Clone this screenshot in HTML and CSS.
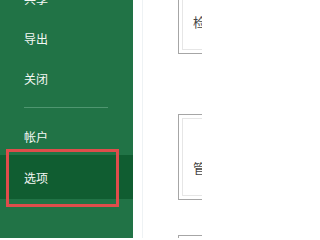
FILE: index.html
```html
<!DOCTYPE html>
<html>
<head>
<meta charset="utf-8">
<link rel="stylesheet" href="styles.css">
</head>
<body>
<nav class="sidebar">
  <div class="menu">
    <div class="item">共享</div>
    <div class="item">导出</div>
    <div class="item">关闭</div>
    <div class="sep"></div>
    <div class="item account">帐户</div>
    <div class="item selected">选项</div>
  </div>
  <div class="mark"></div>
</nav>
<main class="content">
  <div class="rule"></div>
  <div class="cards">
    <div class="card first"><div class="inner"><span class="label">检查</span></div></div>
    <div class="card second"><div class="inner"><span class="label">管理</span></div></div>
    <div class="card third"><div class="inner"></div></div>
  </div>
</main>
</body>
</html>
```

FILE: styles.css
```css
html, body {
  margin: 0;
  padding: 0;
}
body {
  width: 202px;
  height: 238px;
  overflow: hidden;
  display: flex;
  background: #ffffff;
  font-family: "Noto Sans CJK SC", "Noto Sans", sans-serif;
}
.sidebar {
  width: 133px;
  flex-shrink: 0;
  background: #217346;
  position: relative;
}
.menu {
  margin-top: -22px;
  display: flex;
  flex-direction: column;
}
.item {
  height: 40px;
  display: flex;
  align-items: center;
  padding-left: 24px;
  color: #f4f8f5;
  font-size: 12px;
}
.sep {
  height: 1px;
  margin: 9px 25px 9px 24px;
  background: #4f9670;
}
.item.account {
  height: 38px;
}
.item.selected {
  height: 44px;
  background: #105d31;
}
.mark {
  position: absolute;
  left: 6px;
  top: 149px;
  width: 107px;
  height: 52px;
  border: 3px solid #df4d4b;
}
.content {
  flex: 1;
  position: relative;
  overflow: hidden;
}
.rule {
  position: absolute;
  left: 9px;
  top: 0;
  bottom: 0;
  width: 1px;
  background: #eef2f4;
}
.cards {
  margin-top: -32px;
  padding-left: 45px;
  display: flex;
  flex-direction: column;
}
.card {
  width: 100px;
  height: 86px;
  border: 1px solid #a6a6a6;
  box-sizing: border-box;
  padding: 3px;
  background: #fff;
}
.card.second {
  margin-top: 60px;
}
.card.third {
  margin-top: 35px;
}
.inner {
  height: 100%;
  box-sizing: border-box;
  border: 1px solid #e6e6e6;
  padding: 41px 0 0 10px;
}
.label {
  display: block;
  font-size: 13px;
  line-height: 15px;
  color: #444444;
  white-space: nowrap;
}
```
